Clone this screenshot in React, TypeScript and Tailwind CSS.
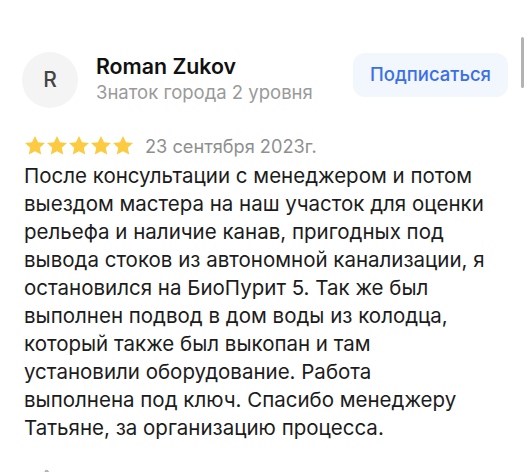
import React from "react";
import { ThumbsUp } from "lucide-react";

const lines = [
  "После консультации с менеджером и потом",
  "выездом мастера на наш участок для оценки",
  "рельефа и наличие канав, пригодных под",
  "вывода стоков из автономной канализации, я",
  "остановился на БиоПурит 5. Так же был",
  "выполнен подвод в дом воды из колодца,",
  "который также был выкопан и там",
  "установили оборудование. Работа",
  "выполнена под ключ. Спасибо менеджеру",
  "Татьяне, за организацию процесса.",
];

function Star() {
  return (
    <svg viewBox="0 0 24 24" className="h-[22px] w-[22px]" aria-hidden>
      <path
        fill="#fccb42"
        d="M12 1l3.3 7 7.6.8-5.7 5.1 1.6 7.5L12 17.6l-6.8 3.8 1.6-7.5L1.1 8.8l7.6-.8z"
      />
    </svg>
  );
}

export default function App() {
  return (
    <div
      className="relative h-[472px] w-[530px] overflow-hidden bg-white"
      style={{ fontFamily: "Inter, 'Noto Sans', sans-serif" }}
    >
      <div className="absolute right-[6px] top-[37px] h-[51px] w-[3px] rounded-full bg-[#b3b3b3]" />

      <div className="px-6 pt-[52px]">
        <header className="flex items-start justify-between">
          <div className="-ml-[2px] flex items-center gap-[18px]">
            <div className="flex h-[56px] w-[56px] items-center justify-center rounded-full bg-[#f4f4f4] text-[21px] font-medium text-[#444]">
              R
            </div>
            <div className="-mt-[3px] flex flex-col">
              <span className="text-[21.3px] font-semibold leading-[27px] text-[#111]">
                Roman Zukov
              </span>
              <span className="text-[18.5px] leading-[25px] text-[#9a9a9a]">
                Знаток города 2 уровня
              </span>
            </div>
          </div>
          <button className="mr-[-2px] mt-[1px] h-[44px] rounded-[12px] bg-[#f2f6fd] px-[17px] text-[18.5px] font-medium text-[#3a6fe8]">
            Подписаться
          </button>
        </header>

        <div className="mt-[26px] flex items-center gap-[11px]">
          <div className="flex gap-0">
            <Star />
            <Star />
            <Star />
            <Star />
            <Star />
          </div>
          <span className="text-[18.2px] leading-[24px] text-[#8f8f8f]">23 сентября 2023г.</span>
        </div>

        <p className="mt-[4px] text-[20.5px] leading-[28px] text-[#1c1c1c]">
          {lines.map((l) => (
            <span key={l} className="block whitespace-nowrap">
              {l}
            </span>
          ))}
        </p>

        <div className="mt-[27px] flex items-center pl-[12px] text-[#b0b0b0]">
          <ThumbsUp className="h-[20px] w-[20px]" strokeWidth={2} />
        </div>
      </div>
    </div>
  );
}
